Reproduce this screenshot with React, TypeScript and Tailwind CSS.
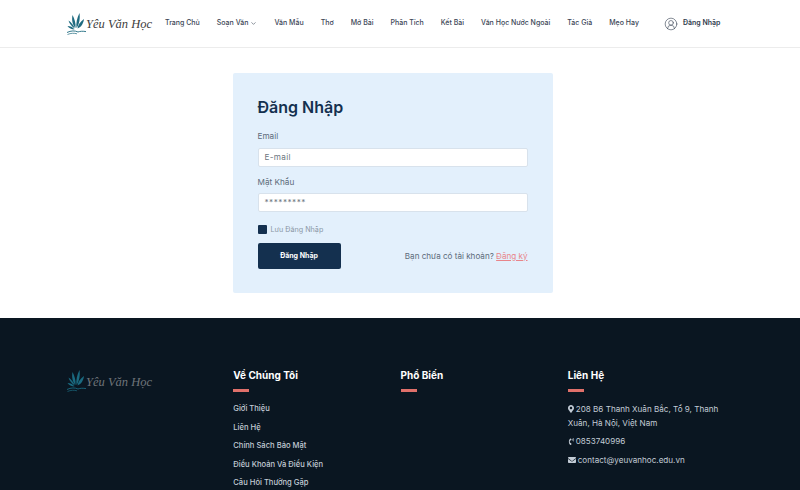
import { ChevronDown, CircleUserRound } from "lucide-react";
import { FaMapMarkerAlt, FaPhoneVolume, FaEnvelope } from "react-icons/fa";

function Logo({ dark = false }: { dark?: boolean }) {
  return (
    <div className="flex items-center">
      <svg width="19" height="22" viewBox="0 0 19 22" className="shrink-0">
        <g fill={dark ? "#1a6a80" : "#1f6b80"}>
          <path d="M8.5 15 C5.5 12 4.5 7 5.5 2 C7.5 6 9 10 8.5 15Z" />
          <path d="M9.5 15 C8.8 10 10 5 12.5 0 C13.2 5 12.5 11 9.5 15Z" />
          <path d="M10.5 15.5 C11 12 13 9 17 6 C16.5 10 14.5 14 10.5 15.5Z" />
          <path d="M7.8 15.5 C4.8 13.5 2.5 11 1.5 7.5 C4.3 9.5 6.5 12 7.8 15.5Z" />
          <path d="M7.5 16.5 C4.5 16.5 2 15 0.5 13 C3 13 6 14 7.5 16.5Z" />
        </g>
        <path d="M0 19.5 C4 17.5 8 17.5 11 19 C13 18.2 16 18 19 18.6" fill="none" stroke={dark ? "#1a6a80" : "#1f6b80"} strokeWidth="0.9" />
        <path d="M0.5 21.5 C4 20 7 20 10 20.8" fill="none" stroke={dark ? "#1a6a80" : "#1f6b80"} strokeWidth="0.7" />
      </svg>
      <span className={`mt-[2px] font-['Liberation_Serif',serif] text-[12.5px] italic leading-none whitespace-nowrap ${dark ? "text-[#6f7479]" : "text-[#3d3d3d]"}`}>
        Yêu Văn Học
      </span>
    </div>
  );
}

function Header() {
  const items = ["Văn Mẫu", "Thơ", "Mở Bài", "Phân Tích", "Kết Bài", "Văn Học Nước Ngoài", "Tác Giả", "Mẹo Hay"];
  return (
    <header className="flex h-[48px] items-center border-b border-[#ececec] bg-white pl-[67px]">
      <div className="w-[98px]"><Logo /></div>
      <nav className="flex items-center gap-[17px] text-[7px] font-medium whitespace-nowrap text-[#3b4656]">
        <span>Trang Chủ</span>
        <span className="flex items-center gap-[2px]">Soạn Văn <ChevronDown size={7} strokeWidth={2} /></span>
        {items.map((t) => <span key={t}>{t}</span>)}
      </nav>
      <div className="ml-[25px] flex items-center gap-[5px] text-[7px] font-semibold whitespace-nowrap text-[#2f3b4c]">
        <CircleUserRound size={14} strokeWidth={1} />
        <span>Đăng Nhập</span>
      </div>
    </header>
  );
}

function Field({ label, placeholder, dots }: { label: string; placeholder: string; dots?: boolean }) {
  return (
    <div>
      <div className="mb-[5.5px] text-[8.2px] leading-[11px] text-[#5c6b7a]">{label}</div>
      <div className={`flex h-[19px] items-center rounded-[2px] border border-[#d8e2ec] bg-white px-[6px] text-[8.2px] text-[#6c7680] ${dots ? "tracking-[0.5px]" : "tracking-[0.3px]"}`}>
        {placeholder}
      </div>
    </div>
  );
}

function LoginCard() {
  return (
    <main className="flex h-[270px] justify-center bg-white pr-[15px] pt-[25px]">
      <section className="h-[220px] w-[320px] rounded-[2px] bg-[#e3f0fc] px-[25px] pt-[22px]">
        <h1 className="text-[16px] font-semibold leading-[24px] text-[#14304f]">Đăng Nhập</h1>
        <div className="mt-[12px] flex flex-col gap-[10px]">
          <Field label="Email" placeholder="E-mail" />
          <Field label="Mật Khẩu" placeholder="*********" dots />
        </div>
        <div className="mt-[12.5px] flex items-center gap-[4px]">
          <span className="h-[9px] w-[9px] rounded-[1px] bg-[#14304f]" />
          <span className="text-[7.2px] text-[#8a97a5]">Lưu Đăng Nhập</span>
        </div>
        <div className="mt-[7.5px] flex items-center justify-between">
          <button className="h-[26px] w-[83px] rounded-[2px] bg-[#14304f] text-[7px] font-bold text-white">Đăng Nhập</button>
          <div className="text-[8.1px] text-[#5c6b7a]">
            Bạn chưa có tài khoản? <span className="text-[#e8858a] underline">Đăng ký</span>
          </div>
        </div>
      </section>
    </main>
  );
}

function FootHead({ title }: { title: string }) {
  return (
    <div>
      <h3 className="text-[10px] font-bold leading-[14px] text-white">{title}</h3>
      <div className="mt-[7px] h-[3px] w-[16px] bg-[#e0706a]" />
    </div>
  );
}

function Footer() {
  const links = ["Giới Thiệu", "Liên Hệ", "Chính Sách Bảo Mật", "Điều Khoản Và Điều Kiện", "Câu Hỏi Thường Gặp"];
  return (
    <footer className="h-[172px] overflow-hidden bg-[#0a1621] pl-[66px] pt-[50px]">
      <div className="grid w-[669px] grid-cols-4 text-[7.6px] text-[#c3ccd6]">
        <div className="pl-[1px] pt-[2px]"><Logo dark /></div>
        <div>
          <FootHead title="Về Chúng Tôi" />
          <ul className="mt-[11px] flex flex-col gap-[7px] font-medium leading-[11.5px]">
            {links.map((l) => <li key={l}>{l}</li>)}
          </ul>
        </div>
        <div><FootHead title="Phổ Biến" /></div>
        <div>
          <FootHead title="Liên Hệ" />
          <div className="mt-[10px] text-[8.1px] leading-[14px]">
            <p><FaMapMarkerAlt size={8} className="-ml-[1px] mr-[1px] inline align-[-1px]" />208 B6 Thanh Xuân Bắc, Tổ 9, Thanh Xuân, Hà Nội, Việt Nam</p>
            <p className="mt-[4px]"><FaPhoneVolume size={7} className="mr-[1px] inline align-[-0.5px]" />0853740996</p>
            <p className="mt-[5px]"><FaEnvelope size={8} className="mr-[2px] inline align-[-1px]" />contact@yeuvanhoc.edu.vn</p>
          </div>
        </div>
      </div>
    </footer>
  );
}

export default function App() {
  return (
    <div className="h-[490px] w-[800px] overflow-hidden bg-white font-['Inter',sans-serif]">
      <Header />
      <LoginCard />
      <Footer />
    </div>
  );
}
